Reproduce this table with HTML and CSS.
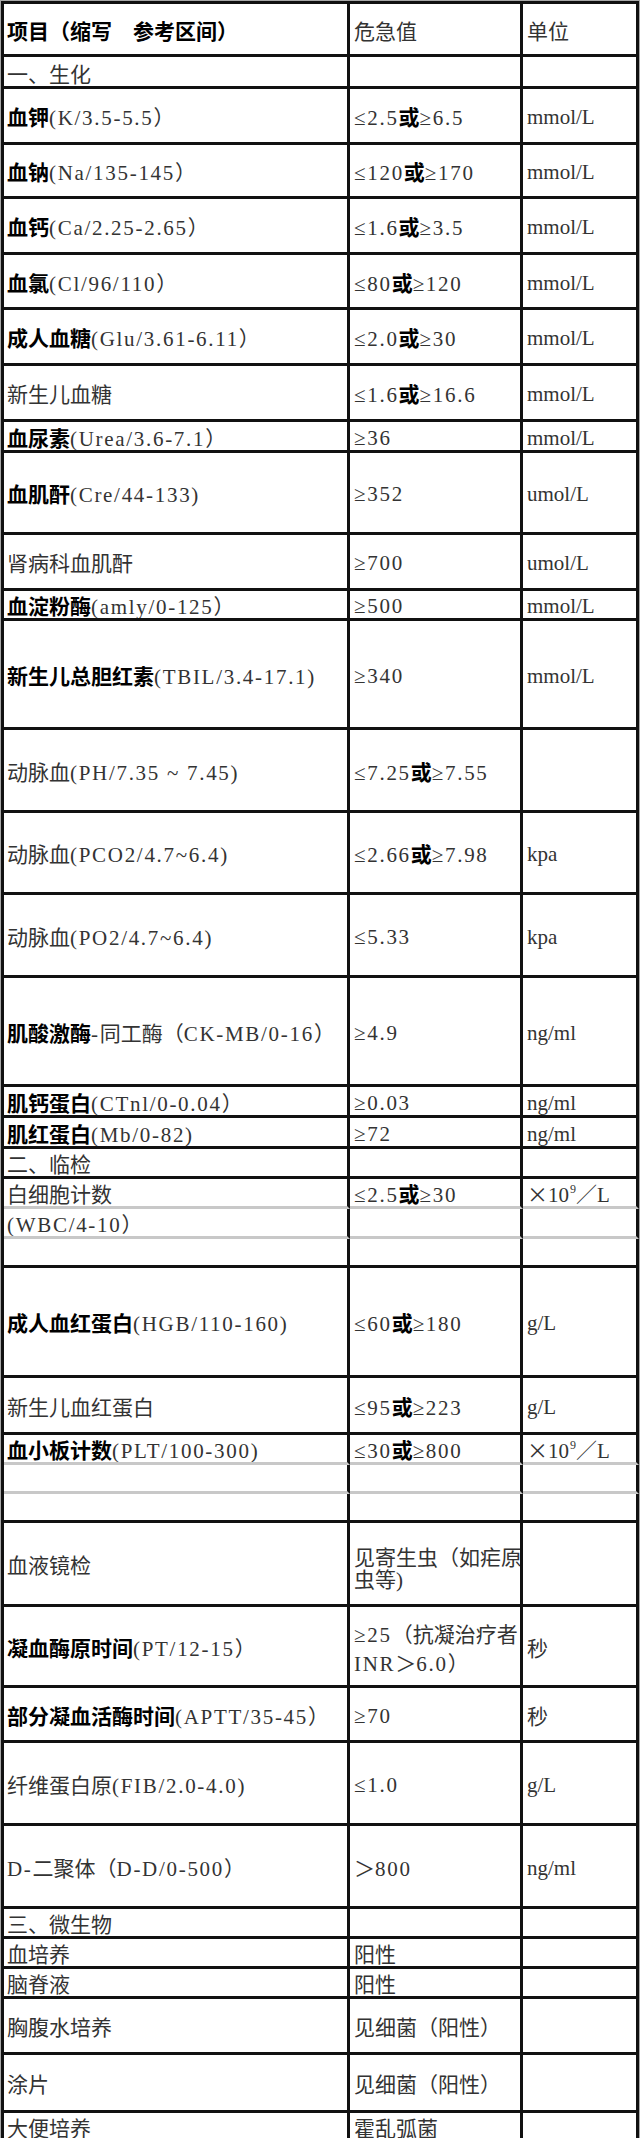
FILE: index.html
```html
<!DOCTYPE html>
<html lang="zh">
<head>
<meta charset="utf-8">
<title>危急值</title>
<link rel="stylesheet" href="styles.css">
</head>
<body>
<div class="sheet">
<table>
<colgroup><col class="c1"><col class="c2"><col class="c3"></colgroup>
<tbody>
<tr class="h53"><td><span class="b">项目（缩写　参考区间）</span></td><td><span class="k">危急值</span></td><td><span class="k">单位</span></td></tr>
<tr class="h32 sec"><td><span class="k">一、生化</span></td><td></td><td></td></tr>
<tr class="h56"><td><span class="b">血钾</span>(K/3.5-5.5<span class="k">）</span></td><td>≤2.5<span class="b">或</span>≥6.5</td><td>mmol/L</td></tr>
<tr class="h54"><td><span class="b">血钠</span>(Na/135-145<span class="k">）</span></td><td>≤120<span class="b">或</span>≥170</td><td>mmol/L</td></tr>
<tr class="h56"><td><span class="b">血钙</span>(Ca/2.25-2.65<span class="k">）</span></td><td>≤1.6<span class="b">或</span>≥3.5</td><td>mmol/L</td></tr>
<tr class="h55"><td><span class="b">血氯</span>(Cl/96/110<span class="k">）</span></td><td>≤80<span class="b">或</span>≥120</td><td>mmol/L</td></tr>
<tr class="h56"><td><span class="b">成人血糖</span>(Glu/3.61-6.11<span class="k">）</span></td><td>≤2.0<span class="b">或</span>≥30</td><td>mmol/L</td></tr>
<tr class="h56"><td><span class="k">新生儿血糖</span></td><td>≤1.6<span class="b">或</span>≥16.6</td><td>mmol/L</td></tr>
<tr class="h31"><td><span class="b">血尿素</span>(Urea/3.6-7.1<span class="k">）</span></td><td>≥36</td><td>mmol/L</td></tr>
<tr class="h82"><td><span class="b">血肌酐</span>(Cre/44-133)</td><td>≥352</td><td>umol/L</td></tr>
<tr class="h56"><td><span class="k">肾病科血肌酐</span></td><td>≥700</td><td>umol/L</td></tr>
<tr class="h30"><td><span class="b">血淀粉酶</span>(amly/0-125<span class="k">）</span></td><td>≥500</td><td>mmol/L</td></tr>
<tr class="h109"><td><span class="b">新生儿总胆红素</span>(TBIL/3.4-17.1)</td><td>≥340</td><td>mmol/L</td></tr>
<tr class="h83"><td><span class="k">动脉血</span>(PH/7.35 ~ 7.45)</td><td>≤7.25<span class="b">或</span>≥7.55</td><td></td></tr>
<tr class="h82"><td><span class="k">动脉血</span>(PCO2/4.7~6.4)</td><td>≤2.66<span class="b">或</span>≥7.98</td><td>kpa</td></tr>
<tr class="h83"><td><span class="k">动脉血</span>(PO2/4.7~6.4)</td><td>≤5.33</td><td>kpa</td></tr>
<tr class="h109"><td><span class="b">肌酸激酶</span>-<span class="k">同工酶（</span>CK-MB/0-16<span class="k">）</span></td><td>≥4.9</td><td>ng/ml</td></tr>
<tr class="h31"><td><span class="b">肌钙蛋白</span>(CTnl/0-0.04<span class="k">）</span></td><td>≥0.03</td><td>ng/ml</td></tr>
<tr class="h31"><td><span class="b">肌红蛋白</span>(Mb/0-82)</td><td>≥72</td><td>ng/ml</td></tr>
<tr class="h30 sec"><td><span class="k">二、临检</span></td><td></td><td></td></tr>
<tr class="h30 gb"><td><span class="k">白细胞计数</span></td><td>≤2.5<span class="b">或</span>≥30</td><td class="unit"><span class="k">×</span>10<sup>9</sup><span class="k">／</span>L</td></tr>
<tr class="h28 gb"><td>(WBC/4-10<span class="k">）</span></td><td></td><td></td></tr>
<tr class="h29"><td></td><td></td><td></td></tr>
<tr class="h110"><td><span class="b">成人血红蛋白</span>(HGB/110-160)</td><td>≤60<span class="b">或</span>≥180</td><td>g/L</td></tr>
<tr class="h57"><td><span class="k">新生儿血红蛋白</span></td><td>≤95<span class="b">或</span>≥223</td><td>g/L</td></tr>
<tr class="h28 gb"><td><span class="b">血小板计数</span>(PLT/100-300)</td><td>≤30<span class="b">或</span>≥800</td><td class="unit"><span class="k">×</span>10<sup>9</sup><span class="k">／</span>L</td></tr>
<tr class="h29 gb"><td></td><td></td><td></td></tr>
<tr class="h29"><td></td><td></td><td></td></tr>
<tr class="h84"><td><span class="k">血液镜检</span></td><td class="ml20"><span class="k">见寄生虫（如疟原</span><br><span class="k">虫等</span>)</td><td></td></tr>
<tr class="h81"><td><span class="b">凝血酶原时间</span>(PT/12-15<span class="k">）</span></td><td class="ml27">≥25<span class="k">（抗凝治疗者</span><br>INR<span class="k">＞</span>6.0<span class="k">）</span></td><td><span class="k">秒</span></td></tr>
<tr class="h55"><td><span class="b">部分凝血活酶时间</span>(APTT/35-45<span class="k">）</span></td><td>≥70</td><td><span class="k">秒</span></td></tr>
<tr class="h83"><td><span class="k">纤维蛋白原</span>(FIB/2.0-4.0)</td><td>≤1.0</td><td>g/L</td></tr>
<tr class="h83"><td>D-<span class="k">二聚体（</span>D-D/0-500<span class="k">）</span></td><td><span class="k">＞</span>800</td><td>ng/ml</td></tr>
<tr class="h30 sec"><td><span class="k">三、微生物</span></td><td></td><td></td></tr>
<tr class="h30"><td><span class="k">血培养</span></td><td><span class="k">阳性</span></td><td></td></tr>
<tr class="h30"><td><span class="k">脑脊液</span></td><td><span class="k">阳性</span></td><td></td></tr>
<tr class="h56"><td><span class="k">胸腹水培养</span></td><td><span class="k">见细菌（阳性）</span></td><td></td></tr>
<tr class="h58"><td><span class="k">涂片</span></td><td><span class="k">见细菌（阳性）</span></td><td></td></tr>
<tr class="h28"><td><span class="k">大便培养</span></td><td><span class="k">霍乱弧菌</span></td><td></td></tr>
</tbody>
</table>
</div>
</body>
</html>
```

FILE: styles.css
```css
html, body {
  margin: 0;
  padding: 0;
  background: #ffffff;
}

.sheet {
  width: 640px;
  box-sizing: border-box;
  border: 1px solid #a8a8a8;
}

table {
  width: 638px;
  table-layout: fixed;
  border-collapse: separate;
  border-spacing: 0;
  border-left: 3px solid #111;
  border-top: 3px solid #111;
  font-family: "Liberation Serif", "Noto Sans CJK SC", serif;
  font-size: 21px;
  line-height: 22px;
  color: #333;
}

.c1 { width: 346px; }
.c2 { width: 173px; }
.c3 { width: 116px; }

td {
  border-right: 3px solid #111;
  border-bottom: 3px solid #111;
  padding: 3px 0 0 3px;
  vertical-align: middle;
  white-space: nowrap;
  overflow: hidden;
  letter-spacing: 1.7px;
}

td + td {
  padding-left: 4px;
}

td + td + td {
  letter-spacing: 0;
}

.b {
  font-family: "Noto Sans CJK SC", sans-serif;
  font-weight: 700;
  color: #000;
  letter-spacing: 0;
}

.k {
  font-family: "Noto Sans CJK SC", sans-serif;
  letter-spacing: 0;
}

.sec td {
  vertical-align: bottom;
}

.gb td {
  border-bottom-color: #c8c8c8;
}

.unit sup {
  font-size: 12px;
  line-height: 0;
  vertical-align: 9px;
  padding-left: 1px;
}

.ml20 { line-height: 20px; padding-top: 8px; }
.ml27 { line-height: 27px; padding-top: 6px; }

.h28 { height: 28px; }
.h29 { height: 29px; }
.h30 { height: 30px; }
.h31 { height: 31px; }
.h32 { height: 32px; }
.h53 { height: 53px; }
.h54 { height: 54px; }
.h55 { height: 55px; }
.h56 { height: 56px; }
.h57 { height: 57px; }
.h58 { height: 58px; }
.h81 { height: 81px; }
.h82 { height: 82px; }
.h83 { height: 83px; }
.h84 { height: 84px; }
.h109 { height: 109px; }
.h110 { height: 110px; }
```
